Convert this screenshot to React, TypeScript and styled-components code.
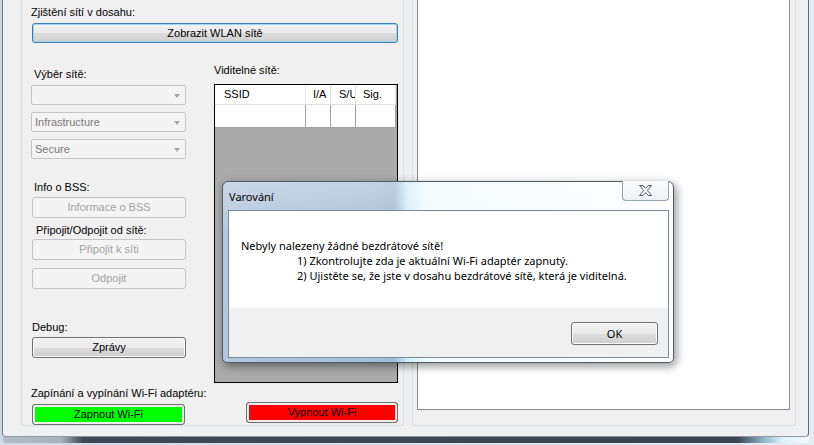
import React from 'react';
import styled, { createGlobalStyle, css } from 'styled-components';

const GlobalStyle = createGlobalStyle`
  html, body {
    margin: 0;
    padding: 0;
    background: #dbe4ed;
  }
  * {
    box-sizing: border-box;
  }
`;

const Screen = styled.div`
  position: relative;
  width: 814px;
  height: 445px;
  overflow: hidden;
  background: linear-gradient(90deg, #cdd9e5 0%, #e4ecf3 100%);
  font-family: "Liberation Sans", Arial, sans-serif;
  font-size: 11px;
  color: #000;
`;

const Client = styled.div`
  display: flex;
  gap: 8px;
  width: 807px;
  height: 437px;
  margin-left: 2px;
  padding-left: 18px;
  background: #f0f0f0;
  border-left: 1px solid #6b7785;
  border-right: 1px solid #5f6a76;
  border-bottom: 1px solid #8f98a1;
  border-radius: 0 0 4px 4px;
`;

const BottomFrame = styled.div`
  height: 6px;
  margin: 0 5px 0 3px;
  border-radius: 0 0 3px 3px;
  background: linear-gradient(
    90deg,
    #b3bcc5 0px,
    #a9b2bb 58px,
    #3f4852 80px,
    #3c454f 735px,
    #8fb3c9 760px,
    #dff3fb 780px,
    #f4f9fc 806px
  );
`;

const GroupBox = styled.div<{ $w: number }>`
  width: ${(p) => p.$w}px;
  height: 426px;
  border: 1px solid #d5dfe5;
  border-top: none;
  border-radius: 0 0 3px 3px;
  display: flex;
  flex-direction: column;
`;

const LeftGroup = styled(GroupBox)`
  padding: 0 5px 0 10px;
`;

const RightGroup = styled(GroupBox)`
  padding: 0 5px 0 4px;
`;

const Caption = styled.div<{ $mt: number; $ml?: number }>`
  height: 13px;
  line-height: 13px;
  margin-top: ${(p) => p.$mt}px;
  margin-left: ${(p) => p.$ml ?? 0}px;
  white-space: nowrap;
`;

type Kind = 'normal' | 'focused' | 'disabled' | 'green' | 'red';

const kinds = {
  normal: css`
    border: 1px solid #707070;
    background: linear-gradient(#f2f2f2 0%, #ebebeb 50%, #dddddd 51%, #cfcfcf 100%);
    box-shadow: inset 0 0 0 1px #fbfbfb;
    color: #000;
  `,
  focused: css`
    border: 1px solid #3c7fb1;
    background: linear-gradient(#f2f2f2 0%, #ebebeb 50%, #dddddd 51%, #cfcfcf 100%);
    box-shadow: inset 0 0 0 1px #9fd5f4;
    color: #000;
  `,
  disabled: css`
    border: 1px solid #c4c4c4;
    background: #f4f4f4;
    color: #a3a3a3;
  `,
  green: css`
    border: 1px solid #707070;
    background: #00ff00;
    box-shadow: inset 0 0 0 2px #ededed;
    color: #000;
  `,
  red: css`
    border: 1px solid #707070;
    background: #ff0000;
    box-shadow: inset 0 0 0 2px #ededed;
    color: #000;
  `,
};

const WinButton = styled.button<{ $kind: Kind; $mt: number; $w?: number; $h?: number }>`
  display: block;
  width: ${(p) => (p.$w ? `${p.$w}px` : '100%')};
  height: ${(p) => p.$h ?? 21}px;
  margin: ${(p) => p.$mt}px 0 0 0;
  padding: 0;
  border-radius: 3px;
  font-family: "Liberation Sans", Arial, sans-serif;
  font-size: 11px;
  line-height: 1;
  text-align: center;
  ${(p) => kinds[p.$kind]}
`;

const MiddleRow = styled.div`
  display: flex;
  justify-content: space-between;
  align-items: flex-start;
`;

const Column = styled.div<{ $w: number }>`
  width: ${(p) => p.$w}px;
  display: flex;
  flex-direction: column;
`;

const Combo = styled.div<{ $mt: number }>`
  position: relative;
  width: 155px;
  height: 20px;
  margin: ${(p) => p.$mt}px 0 0 -1px;
  padding-left: 3px;
  line-height: 18px;
  border: 1px solid #c6c6c6;
  border-radius: 2px;
  background: #f4f4f4;
  color: #7a7a7a;

  &::after {
    content: '';
    position: absolute;
    right: 5px;
    top: 8px;
    border-left: 3.5px solid transparent;
    border-right: 3.5px solid transparent;
    border-top: 4px solid #a8a8a8;
  }
`;

const ListView = styled.div`
  width: 184px;
  height: 299px;
  margin-top: 7px;
  border: 1px solid #000;
  background: #ababab;
`;

const HeaderRow = styled.div`
  display: flex;
  width: 181px;
  height: 20px;
  background: #fff;
  border-bottom: 1px solid #e0e0e0;
`;

const HeaderCell = styled.div<{ $w: number; $pl: number }>`
  width: ${(p) => p.$w}px;
  padding-left: ${(p) => p.$pl}px;
  line-height: 19px;
  border-right: 1px solid #e3e3e3;
  overflow: hidden;
  white-space: nowrap;
`;

const DataRow = styled.div`
  display: flex;
  width: 181px;
  height: 23px;
  background: #fff;
  border-bottom: 1px solid #a0a0a0;
`;

const DataCell = styled.div<{ $w: number }>`
  width: ${(p) => p.$w}px;
  border-right: 1px solid #a0a0a0;
`;

const BottomRow = styled.div`
  display: flex;
  justify-content: space-between;
  align-items: flex-start;
  margin-top: 2px;
`;

const TextPanel = styled.div`
  width: 373px;
  height: 410px;
  background: #fff;
  border: 1px solid #8a8c8f;
  border-top: none;
`;

/* dialog */

const Dialog = styled.div`
  position: absolute;
  left: 222px;
  top: 181px;
  width: 452px;
  height: 182px;
  padding: 0 4px 4px 5px;
  display: flex;
  flex-direction: column;
  border: 1px solid #505b68;
  border-radius: 6px 6px 5px 5px;
  background:
    linear-gradient(180deg, rgba(255, 255, 255, 0.3) 0%, rgba(255, 255, 255, 0) 30%),
    linear-gradient(
      90deg,
      #b3c7dd 0%,
      #a9bfd7 34%,
      #a2bad4 38%,
      #d3eef8 41%,
      #f3fafd 45%,
      #fcfdfe 100%
    );
  box-shadow: 2px 3px 10px rgba(0, 0, 0, 0.45);
  font-family: "Segoe UI", "Noto Sans", sans-serif;
  font-size: 11px;
`;

const TitleBar = styled.div`
  height: 28px;
  display: flex;
  justify-content: space-between;
  align-items: center;
  padding-left: 1px;
`;

const Title = styled.div`
  color: #000;
  margin-top: 1px;
`;

const CloseButton = styled.div`
  align-self: flex-start;
  width: 47px;
  height: 20px;
  margin-top: -1px;
  display: flex;
  align-items: center;
  justify-content: center;
  border: 1px solid #9aa3ad;
  border-top: none;
  border-radius: 0 0 4px 4px;
  background: linear-gradient(#fbfcfd, #eef1f4);
`;

const DialogClient = styled.div`
  flex: 1;
  display: flex;
  flex-direction: column;
  border: 1px solid #7b8a9b;
  background: #f0f0f0;
`;

const Message = styled.div`
  height: 97px;
  padding: 27px 0 0 12px;
  background: #fff;
`;

const MessageLine = styled.div<{ $indent?: number }>`
  height: 15px;
  line-height: 15px;
  padding-left: ${(p) => p.$indent ?? 0}px;
  white-space: nowrap;
  color: #000;
`;

const Footer = styled.div`
  flex: 1;
  display: flex;
  justify-content: flex-end;
  padding: 14px 10px 0 0;
`;

const OkButton = styled.button`
  width: 87px;
  height: 23px;
  padding: 0;
  border: 1px solid #707070;
  border-radius: 3px;
  background: linear-gradient(#f2f2f2 0%, #ebebeb 50%, #dddddd 51%, #cfcfcf 100%);
  box-shadow: inset 0 0 0 1px #fbfbfb;
  font-family: "Segoe UI", "Noto Sans", sans-serif;
  font-size: 11px;
  color: #000;
`;

const CloseGlyph = () => (
  <svg width="13" height="11" viewBox="0 0 13 11">
    <polygon
      points="0.5,0.5 3.8,0.5 6.5,3.4 9.2,0.5 12.5,0.5 8.3,5.5 12.5,10.5 9.2,10.5 6.5,7.6 3.8,10.5 0.5,10.5 4.7,5.5"
      fill="#ffffff"
      stroke="#4b5a6e"
      strokeWidth="1"
      strokeLinejoin="round"
    />
  </svg>
);

const columns = [
  { label: 'SSID', w: 91, pl: 9 },
  { label: 'I/A', w: 25, pl: 7 },
  { label: 'S/U', w: 25, pl: 8 },
  { label: 'Sig.', w: 40, pl: 7 },
];

const App = () => {
  return (
    <>
      <GlobalStyle />
      <Screen>
        <Client>
          <LeftGroup $w={383}>
            <Caption $mt={6} $ml={-1}>Zjištění sítí v dosahu:</Caption>
            <WinButton $kind="focused" $mt={4}>Zobrazit WLAN sítě</WinButton>

            <MiddleRow>
              <Column $w={154}>
                <Caption $mt={25} $ml={2}>Výběr sítě:</Caption>
                <Combo $mt={4} />
                <Combo $mt={7}>Infrastructure</Combo>
                <Combo $mt={7}>Secure</Combo>

                <Caption $mt={22} $ml={2}>Info o BSS:</Caption>
                <WinButton $kind="disabled" $mt={3}>Informace o BSS</WinButton>
                <Caption $mt={6} $ml={4}>Připojit/Odpojit od sítě:</Caption>
                <WinButton $kind="disabled" $mt={2}>Připojit k síti</WinButton>
                <WinButton $kind="disabled" $mt={8}>Odpojit</WinButton>

                <Caption $mt={32}>Debug:</Caption>
                <WinButton $kind="normal" $mt={3}>Zprávy</WinButton>
              </Column>

              <Column $w={184}>
                <Caption $mt={21}>Viditelné sítě:</Caption>
                <ListView>
                  <HeaderRow>
                    {columns.map((c) => (
                      <HeaderCell key={c.label} $w={c.w} $pl={c.pl}>
                        {c.label}
                      </HeaderCell>
                    ))}
                  </HeaderRow>
                  <DataRow>
                    {columns.map((c) => (
                      <DataCell key={c.label} $w={c.w} />
                    ))}
                  </DataRow>
                </ListView>
              </Column>
            </MiddleRow>

            <Caption $mt={4} $ml={-1}>Zapínání a vypínání Wi-Fi adaptéru:</Caption>
            <BottomRow>
              <WinButton $kind="green" $mt={2} $w={153}>Zapnout Wi-Fi</WinButton>
              <WinButton $kind="red" $mt={0} $w={152}>Vypnout Wi-Fi</WinButton>
            </BottomRow>
          </LeftGroup>

          <RightGroup $w={384}>
            <TextPanel />
          </RightGroup>
        </Client>
        <BottomFrame />

        <Dialog>
          <TitleBar>
            <Title>Varování</Title>
            <CloseButton>
              <CloseGlyph />
            </CloseButton>
          </TitleBar>
          <DialogClient>
            <Message>
              <MessageLine>Nebyly nalezeny žádné bezdrátové sítě!</MessageLine>
              <MessageLine $indent={56}>1) Zkontrolujte zda je aktuální Wi-Fi adaptér zapnutý.</MessageLine>
              <MessageLine $indent={56}>2) Ujistěte se, že jste v dosahu bezdrátové sítě, která je viditelná.</MessageLine>
            </Message>
            <Footer>
              <OkButton>OK</OkButton>
            </Footer>
          </DialogClient>
        </Dialog>
      </Screen>
    </>
  );
};

export default App;
